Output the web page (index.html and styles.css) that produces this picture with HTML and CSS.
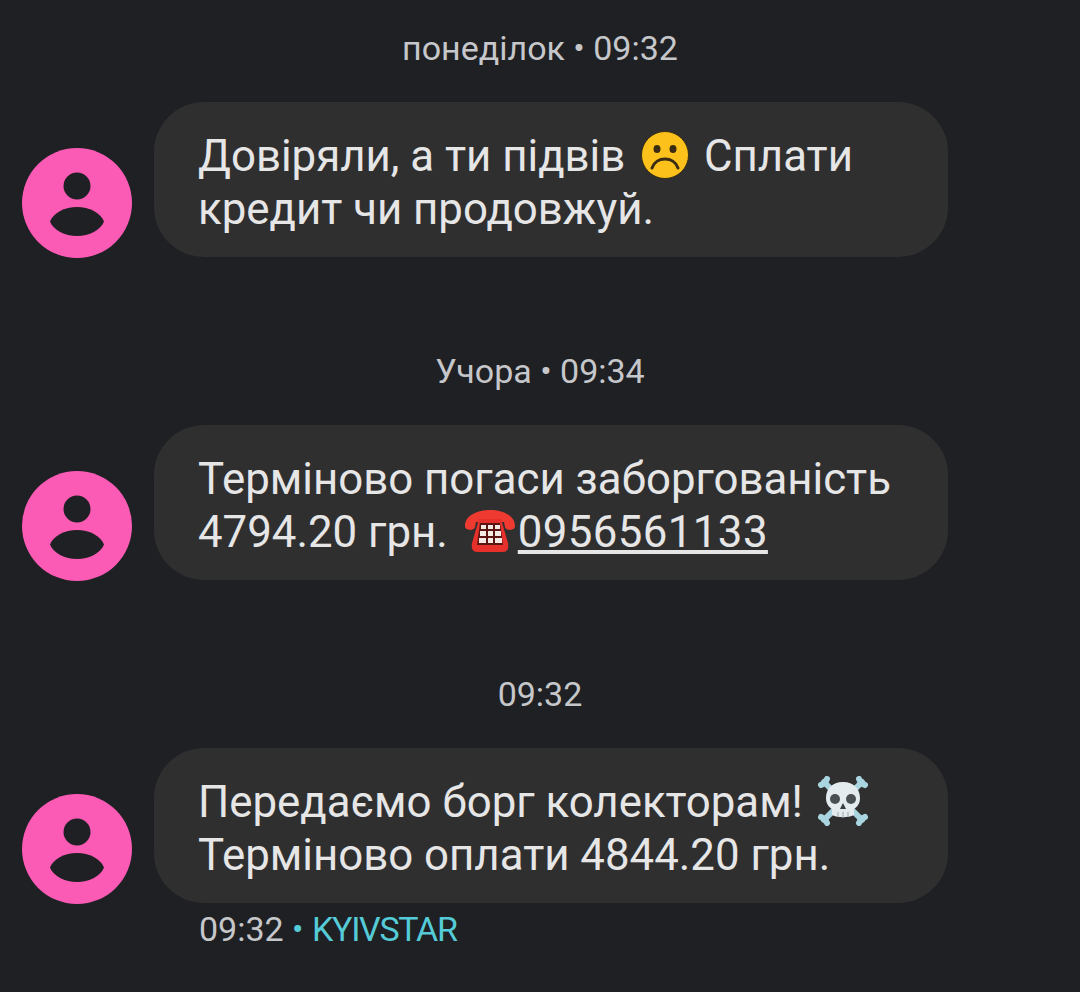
FILE: index.html
```html
<!DOCTYPE html>
<html>
<head>
    <title>Messages</title>
    <link rel="stylesheet" href="styles.css">
</head>
<body>
    <!-- icons used more than once -->
    <svg class="defs" width="0" height="0">
        <symbol id="person" viewBox="0 0 110 110">
            <circle cx="55" cy="55" r="55" fill="#fb5ab5"/>
            <circle cx="55" cy="38" r="13.5" fill="#1f2023"/>
            <path d="M28 73.5 C31 65 43 59 55 59 C67 59 79 65 82 73.5 C79 82 67 88 55 88 C43 88 31 82 28 73.5 Z" fill="#1f2023"/>
        </symbol>
    </svg>

    <div class="thread">
        <div class="stamp">понеділок • 09:32</div>
        <div class="message">
            <svg class="avatar"><use href="#person"/></svg>
            <div class="bubble">
                Довіряли, а ти підвів
                <svg class="emoji" viewBox="0 0 50 50">
                    <circle cx="25" cy="25" r="23.5" fill="#fcc21b" stroke="#3a2e12" stroke-width="1"/>
                    <ellipse cx="17" cy="19" rx="3.5" ry="4" fill="#3a2c12"/>
                    <ellipse cx="33" cy="19" rx="3.5" ry="4" fill="#3a2c12"/>
                    <path d="M12 38 C16 26 34 26 38 38" fill="none" stroke="#3a2c12" stroke-width="3" stroke-linecap="round"/>
                </svg>
                Сплати кредит чи продовжуй.
            </div>
        </div>

        <div class="stamp">Учора • 09:34</div>
        <div class="message">
            <svg class="avatar"><use href="#person"/></svg>
            <div class="bubble">
                Терміново погаси заборгованість 4794.20 грн.
                <svg class="emoji phone" viewBox="0 0 52 44">
                    <path d="M1 17 C1 6 14 1 26 1 C38 1 51 6 51 17 C51 22 42 22 41 18 L40 13 L12 13 L11 18 C10 22 1 22 1 17 Z" fill="#ef3a32"/>
                    <path d="M15 10 L37 10 L44 34 C45 40 43 43 39 43 L13 43 C9 43 7 40 8 34 Z" fill="#e5302b"/>
                    <path d="M16 14 L36 14 L39 36 L13 36 Z" fill="#5a1512"/>
                    <g fill="#f4ece4">
                        <rect x="17" y="16" width="5" height="4"/><rect x="24" y="16" width="5" height="4"/><rect x="31" y="16" width="5" height="4"/>
                        <rect x="16" y="22" width="6" height="5"/><rect x="24" y="22" width="5" height="5"/><rect x="31" y="22" width="6" height="5"/>
                        <rect x="15" y="29" width="7" height="5"/><rect x="24" y="29" width="5" height="5"/><rect x="31" y="29" width="7" height="5"/>
                    </g>
                </svg><a class="number" href="#">0956561133</a>
            </div>
        </div>

        <div class="stamp">09:32</div>
        <div class="message">
            <svg class="avatar"><use href="#person"/></svg>
            <div class="bubble">
                Передаємо борг колекторам!
                <svg class="emoji skull" viewBox="0 0 50 50">
                    <g stroke="#a9d5e0" stroke-width="6" stroke-linecap="round">
                        <path d="M6 6 L44 44"/>
                        <path d="M44 6 L6 44"/>
                        <path d="M3 9 L7 7 L9 3"/>
                        <path d="M41 3 L43 7 L47 9"/>
                        <path d="M3 41 L7 43 L9 47"/>
                        <path d="M41 47 L43 43 L47 41"/>
                    </g>
                    <path d="M25 6 C36 6 42 13 42 22 C42 28 39 31 36 33 L36 39 C30 42 20 42 14 39 L14 33 C11 31 8 28 8 22 C8 13 14 6 25 6 Z" fill="#e3ebee"/>
                    <circle cx="17" cy="23" r="5" fill="#4a4f52"/>
                    <circle cx="33" cy="23" r="5" fill="#4a4f52"/>
                    <path d="M25 27 L28 33 L22 33 Z" fill="#3a3d40"/>
                    <path d="M20 36 V41 M25 36 V42 M30 36 V41" stroke="#9aa4a8" stroke-width="1"/>
                </svg>
                Терміново оплати 4844.20 грн.
            </div>
        </div>
        <div class="meta">09:32 <span class="sim">• <span class="sim-name">KYIVSTAR</span></span></div>
    </div>
</body>
</html>
```

FILE: styles.css
```css
body {
    margin: 0;
    background-color: #1f2023;
    font-family: Roboto, "Noto Sans", sans-serif;
}
.defs {
    display: block;
}
.thread {
    padding: 28px 22px 0;
}
.stamp {
    height: 40px;
    margin-bottom: 34px;
    font-size: 34px;
    line-height: 40px;
    text-align: center;
    color: #c6c7ca;
}
.message + .stamp {
    margin-top: 94px;
}
.message {
    display: flex;
    align-items: flex-end;
    gap: 22px;
    padding-right: 110px;
}
.avatar {
    flex: none;
    width: 110px;
    height: 110px;
    margin-bottom: -1px;
}
.bubble {
    flex: 1;
    padding: 28px 45px 21px 44px;
    border-radius: 50px;
    background-color: #2f2f30;
    color: #e6e6e7;
    font-size: 43.8px;
    line-height: 53px;
}
.emoji {
    width: 50px;
    height: 50px;
    margin: 0 3px 0 4px;
    vertical-align: -9px;
}
.phone {
    width: 52px;
    height: 44px;
    margin: 0 2px 0 5px;
    vertical-align: -6px;
}
.skull {
    margin-left: 4px;
}
.number {
    color: #e6e6e7;
    letter-spacing: 0.4px;
}
.meta {
    margin-top: 6px;
    padding-left: 177px;
    font-size: 34px;
    line-height: 40px;
    color: #c6c7ca;
}
.sim {
    color: #55cbd8;
}
.sim-name {
    letter-spacing: -1.3px;
}
```
